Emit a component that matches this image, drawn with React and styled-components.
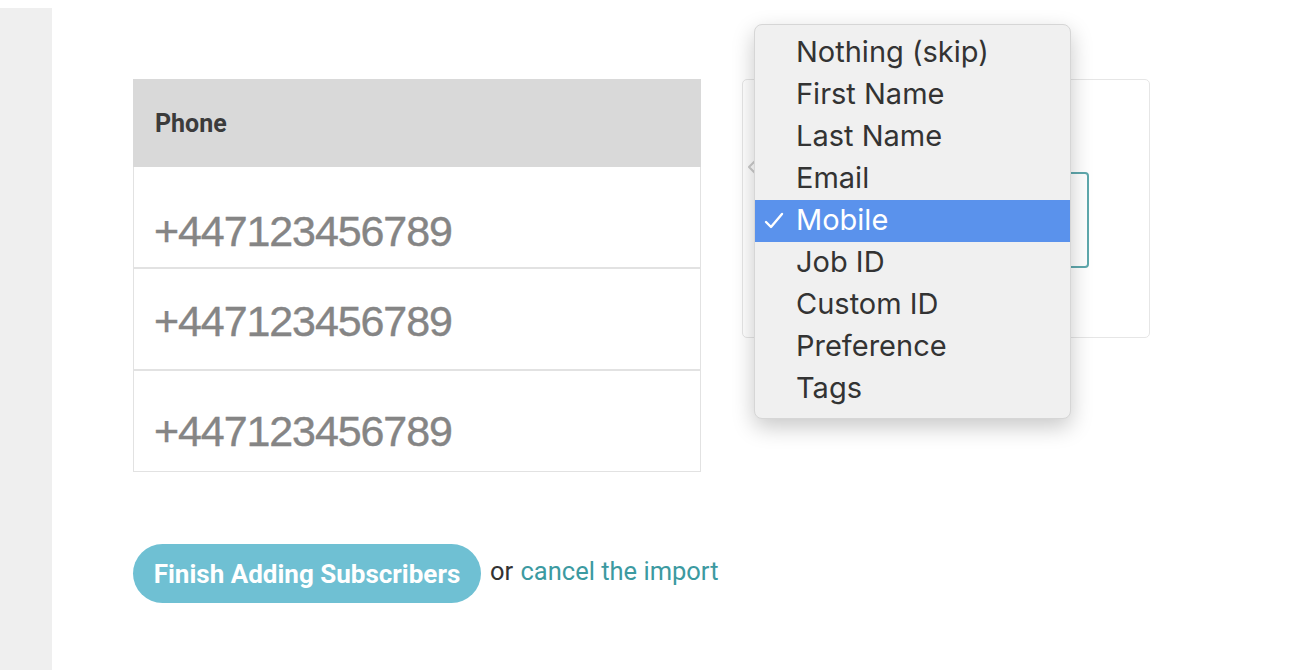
import styled, { createGlobalStyle } from "styled-components";

const GlobalStyle = createGlobalStyle`
  html, body {
    margin: 0;
    padding: 0;
    background: #fff;
  }
  body {
    font-family: Roboto, "Liberation Sans", sans-serif;
    overflow: hidden;
  }
`;

const Page = styled.div`
  display: flex;
  width: 1298px;
  height: 670px;
`;

const SideStrip = styled.div`
  width: 52px;
  margin-top: 8px;
  background: #efefef;
  flex-shrink: 0;
`;

const Main = styled.div`
  padding: 79px 0 0 81px;
  display: flex;
  flex-direction: column;
`;

const Top = styled.div`
  display: flex;
  align-items: flex-start;
`;

const Table = styled.div`
  width: 568px;
  display: flex;
  flex-direction: column;
`;

const HeadCell = styled.div`
  height: 88px;
  background: #d9d9d9;
  display: flex;
  align-items: center;
  padding-left: 22px;
  font-family: Roboto, sans-serif;
  font-weight: 700;
  font-size: 25px;
  color: #3b3b3b;
  box-sizing: border-box;
`;

const Row = styled.div`
  height: ${(p) => p.$h}px;
  box-sizing: border-box;
  border: 1px solid #e2e2e2;
  border-top: ${(p) => (p.$first ? "none" : "1px solid #e2e2e2")};
  display: flex;
  align-items: flex-end;
  padding: 0 0 ${(p) => p.$pb}px 20px;
  font-family: "Liberation Sans", Arial, sans-serif;
  font-size: 43px;
  letter-spacing: -1.1px;
  line-height: 1;
  color: #858585;
  -webkit-text-stroke: 0.4px #858585;
`;

const Mapper = styled.div`
  position: relative;
  margin-left: 41px;
`;

const Panel = styled.div`
  width: 408px;
  height: 259px;
  box-sizing: border-box;
  border: 1px solid #e6e6e6;
  border-radius: 5px;
  position: relative;
`;

const Chevron = styled.svg`
  position: absolute;
  left: 5px;
  top: 80px;
`;

const SelectBox = styled.div`
  position: absolute;
  right: 60px;
  top: 92px;
  width: 200px;
  height: 96px;
  box-sizing: border-box;
  border: 2px solid #5fa8ad;
  border-radius: 4px;
`;

const Menu = styled.ul`
  position: absolute;
  left: 12px;
  top: -55px;
  width: 317px;
  margin: 0;
  padding: 7px 0 8px;
  list-style: none;
  background: #f0f0f0;
  border: 1px solid #d6d6d6;
  border-radius: 8px;
  box-sizing: border-box;
  box-shadow: 0 8px 22px rgba(0, 0, 0, 0.22);
  z-index: 2;
`;

const Item = styled.li`
  height: 42px;
  box-sizing: border-box;
  display: flex;
  align-items: center;
  padding: 0 0 4px 41px;
  position: relative;
  font-family: Inter, "Noto Sans", sans-serif;
  font-size: 29px;
  color: ${(p) => (p.$active ? "#fff" : "#333")};
  background: ${(p) => (p.$active ? "#5a92ec" : "transparent")};
`;

const Check = styled.svg`
  position: absolute;
  left: 9px;
  top: 12px;
`;

const Actions = styled.div`
  display: flex;
  align-items: center;
  margin-top: 72px;
  gap: 9px;
`;

const FinishButton = styled.button`
  width: 348px;
  height: 59px;
  border: none;
  border-radius: 30px;
  background: #6fc0d3;
  color: #fff;
  font-family: Roboto, sans-serif;
  font-weight: 700;
  font-size: 26px;
  padding: 0;
`;

const OrText = styled.span`
  font-family: Roboto, sans-serif;
  font-size: 25.5px;
  color: #333;
  margin-top: -6px;
`;

const CancelLink = styled.a`
  color: #3c9aa1;
  text-decoration: none;
  margin-left: 1px;
`;

const rows = [
  { h: 101, pb: 14 },
  { h: 102, pb: 26 },
  { h: 102, pb: 18 },
];

const options = [
  "Nothing (skip)",
  "First Name",
  "Last Name",
  "Email",
  "Mobile",
  "Job ID",
  "Custom ID",
  "Preference",
  "Tags",
];

const App = () => {
  return (
    <>
      <GlobalStyle />
      <Page>
        <SideStrip />
        <Main>
          <Top>
            <Table>
              <HeadCell>Phone</HeadCell>
              {rows.map((r, i) => (
                <Row key={i} $h={r.h} $pb={r.pb} $first={i === 0}>
                  +447123456789
                </Row>
              ))}
            </Table>
            <Mapper>
              <Panel>
                <Chevron width="8" height="14" viewBox="0 0 8 14">
                  <polyline points="7,1 1,7 7,13" fill="none" stroke="#ccc" strokeWidth="2" />
                </Chevron>
                <SelectBox />
              </Panel>
              <Menu>
                {options.map((o) => (
                  <Item key={o} $active={o === "Mobile"}>
                    {o === "Mobile" && (
                      <Check width="20" height="18" viewBox="0 0 20 18">
                        <polyline
                          points="2,10 7,15 18,2"
                          fill="none"
                          stroke="#fff"
                          strokeWidth="2.4"
                          strokeLinecap="round"
                          strokeLinejoin="round"
                        />
                      </Check>
                    )}
                    {o}
                  </Item>
                ))}
              </Menu>
            </Mapper>
          </Top>
          <Actions>
            <FinishButton>Finish Adding Subscribers</FinishButton>
            <OrText>
              or <CancelLink href="#">cancel the import</CancelLink>
            </OrText>
          </Actions>
        </Main>
      </Page>
    </>
  );
};

export default App;
